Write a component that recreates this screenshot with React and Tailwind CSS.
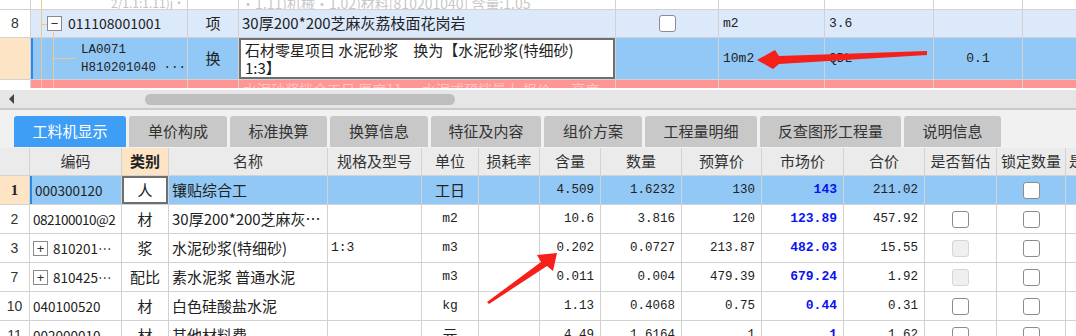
const CJK = "font-['Noto_Sans_CJK_SC',sans-serif]";
const MONO = "font-['Liberation_Mono',monospace]";

const topCols = [31, 157, 51, 377, 103, 106, 109, 89, 60];
const botCols = [30, 92, 47, 159, 94, 57, 61, 61, 81, 80, 82, 81, 72, 69, 30];

const tabs = [
  { name: "工料机显示", w: 112, active: true },
  { name: "单价构成", w: 98 },
  { name: "标准换算", w: 97 },
  { name: "换算信息", w: 98 },
  { name: "特征及内容", w: 110 },
  { name: "组价方案", w: 98 },
  { name: "工程量明细", w: 112 },
  { name: "反查图形工程量", w: 141 },
  { name: "说明信息", w: 97 },
];

const headers = ["", "编码", "类别", "名称", "规格及型号", "单位", "损耗率", "含量", "数量", "预算价", "市场价", "合价", "是否暂估", "锁定数量", "是"];

const rows = [
  { no: "1", code: "000300120", type: "人", name: "镶贴综合工", spec: "", unit: "工日", qty: "4.509", num: "1.6232", budget: "130", market: "143", total: "211.02", est: null, lock: "on", sel: true },
  { no: "2", code: "082100010@2", type: "材", name: "30厚200*200芝麻灰⋯", spec: "", unit: "m2", qty: "10.6", num: "3.816", budget: "120", market: "123.89", total: "457.92", est: "on", lock: "on" },
  { no: "3", code: "810201⋯", plus: true, type: "浆", name: "水泥砂浆(特细砂)", spec: "1:3", unit: "m3", qty: "0.202", num: "0.0727", budget: "213.87", market: "482.03", total: "15.55", est: "off", lock: "on" },
  { no: "7", code: "810425⋯", plus: true, type: "配比", name: "素水泥浆 普通水泥", spec: "", unit: "m3", qty: "0.011", num: "0.004", budget: "479.39", market: "679.24", total: "1.92", est: "off", lock: "on" },
  { no: "10", code: "040100520", type: "材", name: "白色硅酸盐水泥", spec: "", unit: "kg", qty: "1.13", num: "0.4068", budget: "0.75", market: "0.44", total: "0.31", est: "on", lock: "on" },
  { no: "11", code: "002000010", type: "材", name: "其他材料费", spec: "", unit: "元", qty: "4.49", num: "1.6164", budget: "1", market: "1", total: "1.62", est: "on", lock: "on" },
];

function Checkbox({ disabled }) {
  return (
    <div
      className={`w-[17px] h-[17px] rounded-[3px] border ${
        disabled ? "border-[#d6d6d6] bg-[#efefef]" : "border-[#8c8c8c] bg-white"
      }`}
    />
  );
}

function Box({ sign }) {
  return (
    <span className="inline-flex w-[15px] h-[15px] shrink-0 items-center justify-center border border-[#8a8a8a] bg-white text-[13px] leading-none text-[#333] font-['Liberation_Sans',sans-serif]">
      {sign}
    </span>
  );
}

function Cell({ w, className = "", children }) {
  return (
    <div
      style={{ width: w }}
      className={`shrink-0 h-full border-r border-[#d2d2d2] flex items-center overflow-hidden whitespace-nowrap ${className}`}
    >
      {children}
    </div>
  );
}

function TopGrid() {
  const c = topCols;
  return (
    <div className="flex flex-col">
      {/* partial row above */}
      <div className="flex h-[10px] border-b border-[#d2d2d2] bg-white">
        <Cell w={c[0]} />
        <Cell w={c[1]} className="relative">
          <span className="absolute left-[10px] top-0 h-full w-px bg-[#f4c58e]" />
          <span className="absolute left-[80px] -top-[6px] text-[12px] text-[#c4c4c4]">2/1.1:1.11)j·</span>
        </Cell>
        <Cell w={c[2]} />
        <Cell w={c[3]} className="relative">
          <span className="absolute left-[2px] -top-[7px] text-[14px] text-[#c8c8c8]">·1.11)机械·1.02)材料[810201040] 含量:1.05</span>
        </Cell>
        <Cell w={c[4]} />
        <Cell w={c[5]} />
        <Cell w={c[6]} />
        <Cell w={c[7]} />
        <Cell w={c[8]} />
      </div>
      {/* row 8 */}
      <div className="flex h-[28px] border-b border-[#d2d2d2]">
        <Cell w={c[0]} className="justify-center bg-white font-['Liberation_Sans',sans-serif] text-[14px] text-[#333]">8</Cell>
        <Cell w={c[1]} className="relative bg-[#dce9fb] pl-[16px] gap-[6px]">
          <span className="absolute left-[10px] top-0 h-full w-px bg-[#f4c58e]" />
          <span className="absolute left-[10px] top-[14px] h-px w-[6px] bg-[#f4c58e]" />
          <span className="absolute left-[22px] top-[22px] h-[6px] w-px bg-[#f4c58e]" />
          <Box sign="−" />
          <span className="text-[14px] text-[#222]">011108001001</span>
        </Cell>
        <Cell w={c[2]} className="justify-center bg-[#dce9fb]">项</Cell>
        <Cell w={c[3]} className="bg-[#dce9fb] pl-[3px]">30厚200*200芝麻灰荔枝面花岗岩</Cell>
        <Cell w={c[4]} className="justify-center bg-[#dce9fb]"><Checkbox /></Cell>
        <Cell w={c[5]} className={`bg-[#dce9fb] pl-[4px] text-[13px] ${MONO}`}>m2</Cell>
        <Cell w={c[6]} className={`bg-[#dce9fb] pl-[4px] text-[13px] ${MONO}`}>3.6</Cell>
        <Cell w={c[7]} className="bg-[#dce9fb]" />
        <Cell w={c[8]} className="bg-[#dce9fb]" />
      </div>
      {/* LA0071 row */}
      <div className="flex h-[42px] border-b border-[#d2d2d2]">
        <Cell w={c[0]} className="bg-[#fde4c5]" />
        <Cell w={c[1]} className="relative bg-[#92c8f5] border-l-2 border-l-[#2f86e8] pl-[48px]">
          <span className="absolute left-[8px] top-0 h-full w-px bg-[#f4c58e]" />
          <span className="absolute left-[20px] top-0 h-full w-px bg-[#f4c58e]" />
          <span className="absolute left-[20px] top-[20px] h-px w-[22px] bg-[#f4c58e]" />
          <div className={`flex flex-col leading-[18px] text-[12.5px] text-[#222] ${MONO}`}>
            <span>LA0071</span>
            <span>H810201040 ···</span>
          </div>
        </Cell>
        <Cell w={c[2]} className="justify-center bg-[#92c8f5]">换</Cell>
        <Cell w={c[3]} className="bg-[#92c8f5]">
          <div className="h-full w-full border-2 border-[#6f6f6f] bg-white px-[4px] pt-[1px] leading-[18px] text-[15px] whitespace-normal">
            石材零星项目 水泥砂浆　换为【水泥砂浆(特细砂)
            <br />
            1:3】
          </div>
        </Cell>
        <Cell w={c[4]} className="bg-[#92c8f5]" />
        <Cell w={c[5]} className={`bg-[#92c8f5] pl-[4px] text-[13px] ${MONO}`}>10m2</Cell>
        <Cell w={c[6]} className={`bg-[#92c8f5] pl-[4px] text-[13px] ${MONO}`}>QDL</Cell>
        <Cell w={c[7]} className={`bg-[#92c8f5] justify-center text-[13px] ${MONO}`}>0.1</Cell>
        <Cell w={c[8]} className="bg-[#92c8f5]" />
      </div>
      {/* red row (cut) */}
      <div className="flex h-[8px]">
        <Cell w={c[0]} className="bg-white" />
        <Cell w={c[1]} className="relative bg-[#ff9595]">
          <span className="absolute left-[10px] top-0 h-full w-px bg-[#f4c58e]" />
          <span className="absolute left-[22px] top-0 h-full w-px bg-[#f4c58e]" />
        </Cell>
        <Cell w={c[2]} className="bg-[#ff9595]" />
        <Cell w={c[3]} className="relative bg-[#ff9595]">
          <span className="absolute left-[4px] top-[-1px] text-[14px] text-[#ffc4c4]">水泥砂浆拌合工日 厚度11 　 水泥或预拌量上 报价 　 高度</span>
        </Cell>
        <Cell w={c[4]} className="bg-[#ff9595]" />
        <Cell w={c[5]} className="bg-[#ff9595]" />
        <Cell w={c[6]} className="bg-[#ff9595]" />
        <Cell w={c[7]} className="bg-[#ff9595]" />
        <Cell w={c[8]} className="bg-[#ff9595]" />
      </div>
      <div className="h-[2px] bg-white" />
    </div>
  );
}

function ScrollBar() {
  return (
    <div className="flex h-[20px] items-center bg-[#e6e6e6] border-b-2 border-[#cacaca]">
      <div className="w-[145px] shrink-0 pl-[9px]">
        <div className="w-0 h-0 border-y-[5px] border-y-transparent border-r-[5px] border-r-[#444]" />
      </div>
      <div className="h-[11px] w-[310px] rounded-full bg-[#bebebe]" />
    </div>
  );
}

function Tabs() {
  return (
    <div className="flex h-[38px] items-end gap-[3px] bg-[#f1f1f1] pl-[14px] pb-px">
      {tabs.map((t) => (
        <div
          key={t.name}
          style={{ width: t.w }}
          className={`h-[31px] shrink-0 rounded-t-[3px] flex items-center justify-center text-[15px] ${
            t.active ? "bg-[#3e9df5] text-white" : "bg-[#c8c8c8] text-[#333]"
          }`}
        >
          {t.name}
        </div>
      ))}
    </div>
  );
}

function BottomGrid() {
  const c = botCols;
  const num = `justify-end pr-[6px] text-[12.5px] text-[#222] ${MONO}`;
  return (
    <div className="flex flex-col">
      <div className="flex h-[28px] border-b border-[#d2d2d2] bg-[#ebebeb] text-[15px] text-[#333]">
        {headers.map((h, i) => (
          <Cell
            key={i}
            w={c[i]}
            className={`justify-center ${i === 2 ? "bg-[#fde4c5] font-bold text-[#222]" : ""} ${i === 14 ? "justify-start pl-[3px]" : ""}`}
          >
            {h}
          </Cell>
        ))}
      </div>
      {rows.map((r) => {
        const bg = r.sel ? "bg-[#92c8f5]" : "bg-white";
        const unitMono = /^[a-z0-9]+$/.test(r.unit);
        return (
          <div key={r.no} className="flex h-[29px] border-b border-[#d2d2d2]">
            <Cell
              w={c[0]}
              className={`justify-center ${
                r.sel
                  ? "bg-[#fde4c5] font-bold font-['Liberation_Serif',serif] text-[15px]"
                  : "bg-white font-['Liberation_Sans',sans-serif] text-[14px] text-[#333]"
              }`}
            >
              {r.no}
            </Cell>
            <Cell
              w={c[1]}
              className={`${bg} pl-[3px] gap-[5px] text-[13.5px] text-[#222] ${r.sel ? "border-l-2 border-l-[#2f86e8]" : ""}`}
            >
              {r.plus && <Box sign="+" />}
              <span className={r.code.length > 10 ? "tracking-[-0.5px]" : ""}>{r.code}</span>
            </Cell>
            <Cell w={c[2]} className={`${bg} justify-center`}>
              {r.sel ? (
                <div className="h-full w-full border-2 border-[#6f6f6f] bg-white flex items-center justify-center">{r.type}</div>
              ) : (
                r.type
              )}
            </Cell>
            <Cell w={c[3]} className={`${bg} pl-[3px]`}>{r.name}</Cell>
            <Cell w={c[4]} className={`${bg} pl-[3px] text-[13px] ${MONO}`}>{r.spec}</Cell>
            <Cell w={c[5]} className={`${bg} justify-center ${unitMono ? `text-[13px] ${MONO}` : ""}`}>{r.unit}</Cell>
            <Cell w={c[6]} className={bg} />
            <Cell w={c[7]} className={`${bg} ${num}`}>{r.qty}</Cell>
            <Cell w={c[8]} className={`${bg} ${num}`}>{r.num}</Cell>
            <Cell w={c[9]} className={`${bg} ${num}`}>{r.budget}</Cell>
            <Cell w={c[10]} className={`${bg} justify-end pr-[6px] text-[13px] font-bold text-[#0a14f0] ${MONO}`}>{r.market}</Cell>
            <Cell w={c[11]} className={`${bg} ${num}`}>{r.total}</Cell>
            <Cell w={c[12]} className={`${bg} justify-center`}>
              {r.est && <Checkbox disabled={r.est === "off"} />}
            </Cell>
            <Cell w={c[13]} className={`${bg} justify-center`}>
              {r.lock && <Checkbox />}
            </Cell>
            <Cell w={c[14]} className={bg} />
          </div>
        );
      })}
    </div>
  );
}

function Arrows() {
  return (
    <svg className="pointer-events-none absolute inset-0" width="1076" height="336" viewBox="0 0 1076 336">
      <polygon fill="#f5201a" points="927,51 779,56 775,50 757,60 773,69 779,64 927,55" />
      <polygon fill="#f5201a" points="487,302 541,262 537,255 557,253 553,271 547,266 489,304" />
    </svg>
  );
}

export default function App() {
  return (
    <div className={`relative w-[1076px] h-[336px] overflow-hidden bg-white text-[15px] text-[#222] ${CJK}`}>
      <TopGrid />
      <ScrollBar />
      <Tabs />
      <BottomGrid />
      <Arrows />
    </div>
  );
}
